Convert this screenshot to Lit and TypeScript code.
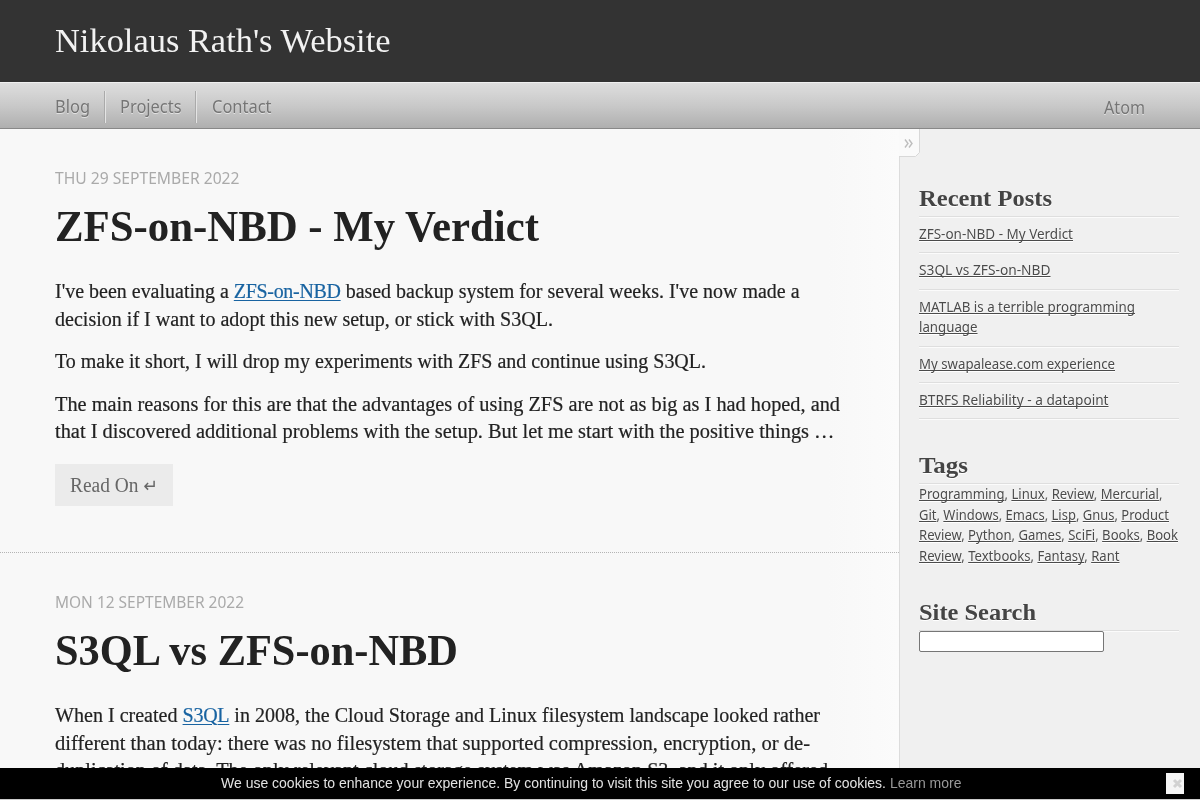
import { LitElement, html, css } from "lit";
import { customElement, property } from "lit/decorators.js";

/** One line of text, condensed or stretched to a given measure. */
@customElement("fit-line")
class FitLine extends LitElement {
  @property({ type: Number }) w = 100;
  static styles = css`
    :host { display: block; white-space: nowrap; }
    .inner { display: inline-block; transform-origin: 0 50%; vertical-align: top; }
  `;
  render() {
    return html`<span class="inner"><slot></slot></span>`;
  }
  firstUpdated() {
    const inner = this.renderRoot.querySelector(".inner") as HTMLElement;
    this.style.width = `${this.w}px`;
    requestAnimationFrame(() => {
      inner.style.transform = "none";
      const natural = inner.getBoundingClientRect().width;
      if (natural) inner.style.transform = `scaleX(${this.w / natural})`;
    });
  }
}

const tagLines: [number, string[], boolean][] = [
  [243.5, ["Programming", "Linux", "Review", "Mercurial"], true],
  [250, ["Git", "Windows", "Emacs", "Lisp", "Gnus", "Product"], false],
  [259, ["Review", "Python", "Games", "SciFi", "Books", "Book"], false],
  [200.5, ["Review", "Textbooks", "Fantasy", "Rant"], false],
];

const posts: [number, string][][] = [
  [[154, "ZFS-on-NBD - My Verdict"]],
  [[131.5, "S3QL vs ZFS-on-NBD"]],
  [[216, "MATLAB is a terrible programming"], [58.5, "language"]],
  [[196, "My swapalease.com experience"]],
  [[189.5, "BTRFS Reliability - a datapoint"]],
];

@customElement("app-root")
class AppRoot extends LitElement {
  static styles = css`
    :host {
      display: flex; flex-direction: column; position: relative;
      width: 1200px; height: 800px; overflow: hidden; background: #f0f0f0;
      font-family: "Liberation Serif", serif; color: #222;
    }
    * { box-sizing: border-box; }
    header { flex: none; height: 82px; background: #333; color: #f2f2f2; padding: 22px 55px 0; font-size: 33.5px; line-height: 38px; }
    nav {
      flex: none; height: 47px; display: flex; padding: 8px 55px 0;
      border-top: 1px solid #f0f0f0; border-bottom: 1px solid #888;
      background: linear-gradient(#dedede, #c9c9c9 50%, #afafaf);
      font: 17.2px/32px "Noto Sans", sans-serif; color: #757575; text-shadow: 0 1px #e2e2e2;
    }
    .item { height: 32px; padding-right: 13.5px; margin-right: 15.5px; border-right: 1px solid #aaa; box-shadow: 1px 0 #e4e4e4; }
    .item.last { border: 0; box-shadow: none; }
    .atom { margin-left: auto; padding-top: 1px; }
    .body { flex: 1; min-height: 0; display: grid; grid-template-columns: 899px 301px; }
    main { min-height: 0; overflow: hidden; background: linear-gradient(90deg, #f8f8f8 92%, #fbfbfb); }
    article { height: 424px; padding: 37px 0 0 55px; border-bottom: 1px dotted #b4b4b4; }
    .date { font: 15.8px/24px "Noto Sans", sans-serif; color: #aaa; }
    h1 { font-size: 43.5px; line-height: 50px; margin: 11px 0 27px; }
    p { font-size: 20px; line-height: 27.6px; margin: 0 0 15px; -webkit-text-stroke: 0.2px; }
    p a { color: #1863a1; letter-spacing: -0.3px; text-decoration-thickness: 1px; text-underline-offset: 2px; }
    .more { width: 118px; height: 42px; margin-top: 17.7px; padding: 7px 15px; background: #ebebeb; color: #666; font-size: 20px; line-height: 28px; }
    .ret { font-family: "DejaVu Sans", sans-serif; font-size: 18px; line-height: 1; }
    aside { position: relative; border-left: 1px solid #dcdcdc; padding: 55.5px 20px 0 19px; }
    aside .text { font: 14.3px/20.5px "Noto Sans", sans-serif; color: #555; }
    aside a { color: #4b4b4b; text-decoration-line: underline; text-decoration-thickness: 1px; text-underline-offset: 1px; text-decoration-skip-ink: none; text-shadow: 0 1px #fff; }
    h2 { width: 260px; margin: 0; padding-bottom: 3.5px; font-size: 22.3px; line-height: 28px; color: #444; text-shadow: 0 1px #fff; border-bottom: 1px solid #dedede; box-shadow: 0 1px #fbfbfb; }
    .post { width: 260px; padding: 6px 0 7.9px; border-bottom: 1px solid #dedede; box-shadow: 0 1px #fbfbfb; margin-top: 1px; }
    .gap { margin-top: 32.5px; }
    .gap.search { margin-top: 33px; padding-bottom: 3px; }
    input { display: block; position: relative; width: 185px; height: 21px; margin: 0; border: 1px solid #767676; border-radius: 2px; background: #fff; }
    .toggle { position: absolute; left: -1px; top: 0; width: 21px; height: 28px; }
    .toggle svg { display: block; }
    .cookies {
      position: absolute; left: 0; right: 0; bottom: 0; height: 32px; z-index: 2;
      display: flex; padding: 5px 16px 0 220.5px; background: #000; color: #e2e2e2;
      border-bottom: 1px solid #ccc; font: 14.4px/20px "Liberation Sans", sans-serif;
    }
    .learn { color: #999; }
    .close { margin-left: auto; width: 18px; height: 21px; background: #f5f5f5; }
    .close svg { display: block; }
  `;

  render() {
    return html`
      <header><fit-line w="335.5">Nikolaus Rath's Website</fit-line></header>
      <nav>
        <div class="item"><fit-line w="35">Blog</fit-line></div>
        <div class="item"><fit-line w="61.5">Projects</fit-line></div>
        <div class="item last"><fit-line w="59.5">Contact</fit-line></div>
        <div class="atom"><fit-line w="41">Atom</fit-line></div>
      </nav>
      <div class="body">
        <main>
          <article>
            <div class="date"><fit-line w="184.5">THU 29 SEPTEMBER 2022</fit-line></div>
            <h1><fit-line w="484">ZFS-on-NBD - My Verdict</fit-line></h1>
            <p>
              <fit-line w="744.5">I've been evaluating a <a href="#">ZFS-on-NBD</a> based backup system for several weeks. I've now made a</fit-line>
              <fit-line w="498">decision if I want to adopt this new setup, or stick with S3QL.</fit-line>
            </p>
            <p><fit-line w="651">To make it short, I will drop my experiments with ZFS and continue using S3QL.</fit-line></p>
            <p>
              <fit-line w="785">The main reasons for this are that the advantages of using ZFS are not as big as I had hoped, and</fit-line>
              <fit-line w="779.5">that I discovered additional problems with the setup. But let me start with the positive things …</fit-line>
            </p>
            <div class="more"><fit-line w="88">Read On <span class="ret">↵</span></fit-line></div>
          </article>
          <article>
            <div class="date"><fit-line w="189">MON 12 SEPTEMBER 2022</fit-line></div>
            <h1><fit-line w="403">S3QL vs ZFS-on-NBD</fit-line></h1>
            <p>
              <fit-line w="765">When I created <a href="#">S3QL</a> in 2008, the Cloud Storage and Linux filesystem landscape looked rather</fit-line>
              <fit-line w="755">different than today: there was no filesystem that supported compression, encryption, or de-</fit-line>
              <fit-line w="773">duplication of data. The only relevant cloud storage system was Amazon S3, and it only offered</fit-line>
            </p>
          </article>
        </main>
        <aside>
          <div class="toggle">
            <svg width="21" height="28" viewBox="0 0 21 28" fill="none">
              <path d="M0 0H20.5V23L16.500 27.500H0Z" fill="#fafafa" />
              <path d="M20.500 0V23.500L16.500 27.500H0" stroke="#d8d8d8" />
              <path d="M6 10.500l3 4-3 4M10 10.500l3 4-3 4" stroke="#bdbdbd" stroke-width="1.400" />
            </svg>
          </div>
          <h2><fit-line w="133">Recent Posts</fit-line></h2>
          ${posts.map((lines) => html`<div class="post text">${lines.map(([w, t]) => html`<fit-line .w=${w}><a href="#">${t}</a></fit-line>`)}</div>`)}
          <h2 class="gap"><fit-line w="49">Tags</fit-line></h2>
          <div class="text">
            ${tagLines.map(([w, tags, comma]) => html`<fit-line .w=${w}>${tags.map((t, i) => html`<a href="#">${t}</a>${i < tags.length - 1 ? ", " : comma ? "," : ""}`)}</fit-line>`)}
          </div>
          <h2 class="gap search"><fit-line w="117">Site Search</fit-line></h2>
          <input type="text" aria-label="Site Search" />
        </aside>
      </div>
      <div class="cookies">
        <fit-line w="740.5">We use cookies to enhance your experience. By continuing to visit this site you agree to our use of cookies. <span class="learn">Learn more</span></fit-line>
        <div class="close">
          <svg width="18" height="21" viewBox="0 0 18 21"><path d="M8 7l7 7M15 7l-7 7" stroke="#d2d2d2" stroke-width="3" /></svg>
        </div>
      </div>
    `;
  }
}
